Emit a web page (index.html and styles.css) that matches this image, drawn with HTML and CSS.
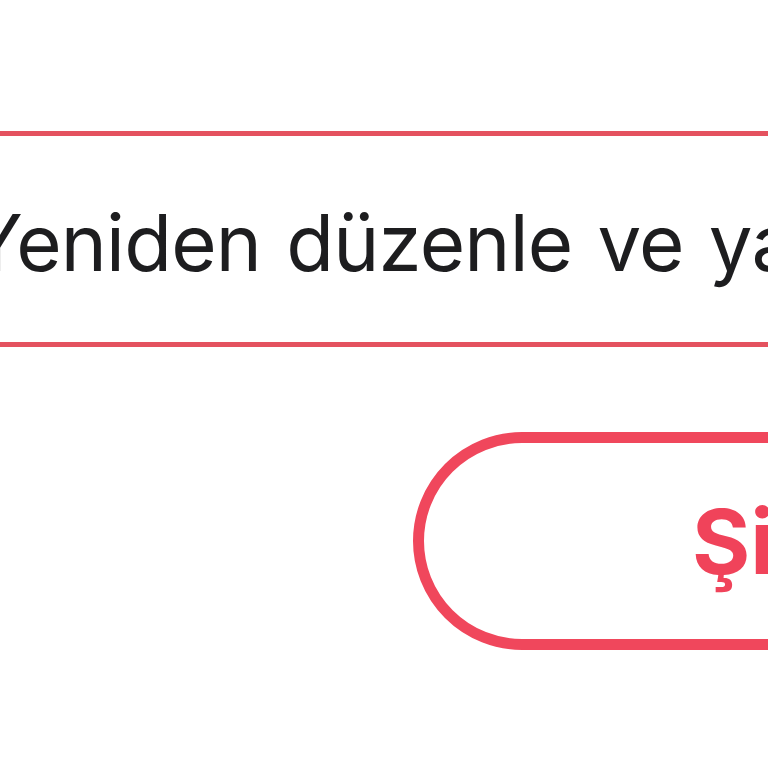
FILE: index.html
```html
<!DOCTYPE html>
<html lang="tr">

<head>
    <meta charset="UTF-8">
    <meta name="viewport" content="width=device-width, initial-scale=1.0">
    <title>Düzenle</title>
    <link rel="stylesheet" href="styles.css">
</head>

<body>
    <div class="screen">
        <div class="option-row">
            <span class="option-label">Yeniden düzenle ve yayınla</span>
        </div>
        <div class="action-row">
            <button class="pill-button">Şimdi paylaş</button>
        </div>
    </div>
</body>

</html>
```

FILE: styles.css
```css
body {
    margin: 0;
    padding: 0;
    background-color: #fff;
    font-family: Inter, "Noto Sans", sans-serif;
    overflow: hidden;
    width: 768px;
    height: 768px;
}

.screen {
    padding-top: 131px;
    width: 1400px;
}

.option-row {
    display: flex;
    align-items: center;
    height: 206px;
    border-top: 5px solid #e4525f;
    border-bottom: 5px solid #e4525f;
    width: 768px;
    overflow: hidden;
}

.option-label {
    margin-left: -30px;
    margin-top: 6px;
    font-size: 78px;
    letter-spacing: -0.8px;
    word-spacing: 4px;
    color: #1d1d1f;
    white-space: nowrap;
}

.action-row {
    margin-top: 85px;
    padding-left: 413px;
}

.pill-button {
    display: flex;
    align-items: center;
    box-sizing: border-box;
    width: 800px;
    height: 218px;
    padding: 0 0 0 268px;
    border: 11px solid #f0475c;
    border-radius: 109px;
    background-color: #fff;
    color: #f0435a;
    font-family: Inter, "Noto Sans", sans-serif;
    font-size: 89px;
    font-weight: 700;
    white-space: nowrap;
}
```
